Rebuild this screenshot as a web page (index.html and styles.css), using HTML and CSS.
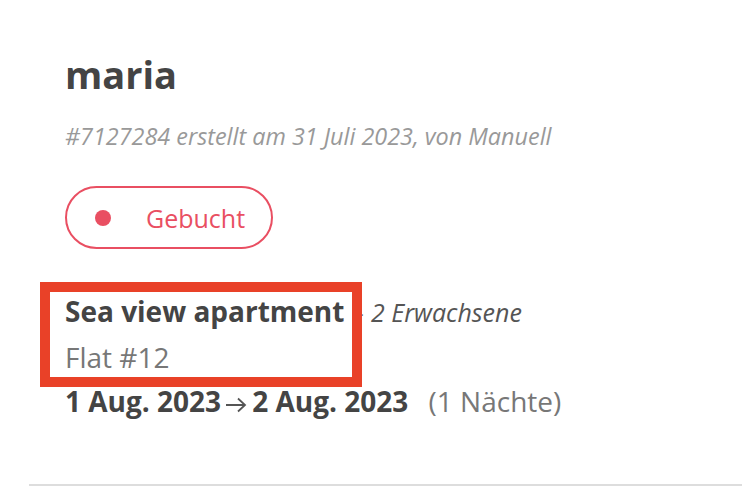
FILE: index.html
```html
<!DOCTYPE html>
<html lang="de">
<head>
<meta charset="utf-8">
<link rel="stylesheet" href="styles.css">
</head>
<body>
<div class="card">
  <h1 class="title">maria</h1>
  <p class="meta">#7127284 erstellt am 31 Juli 2023, von Manuell</p>
  <div class="badge"><span class="dot"></span><span class="badge-text">Gebucht</span></div>
  <div class="details">
    <div class="line"><strong>Sea view apartment</strong> <span class="sep">–</span> <em class="guests">2 Erwachsene</em></div>
    <div class="line unit">Flat #12</div>
    <div class="line"><strong>1 Aug. 2023</strong><svg class="arrow" width="22" height="16" viewBox="0 0 22 16" aria-label="→"><path d="M1 8H20M13 1.5L20 8L13 14.5" fill="none" stroke="#555555" stroke-width="1.8"/></svg><strong>2 Aug. 2023</strong> <span class="nights">(1 Nächte)</span></div>
    <div class="highlight"></div>
  </div>
</div>
</body>
</html>
```
FILE: styles.css
```css
html, body {
  margin: 0;
  padding: 0;
  background: #ffffff;
}
body {
  font-family: "Open Sans", "Noto Sans", sans-serif;
  color: #444444;
}
.card {
  margin-left: 29px;
  padding: 46px 0 61px 36px;
  border-bottom: 2px solid #dddddd;
}
.title {
  margin: 0;
  font-size: 38px;
  line-height: 56px;
  font-weight: 700;
  color: #444444;
}
.meta {
  margin: 20px 0 0 0;
  font-size: 23.4px;
  line-height: 28px;
  font-style: italic;
  color: #999999;
}
.badge {
  margin-top: 36px;
  display: inline-flex;
  align-items: center;
  box-sizing: border-box;
  width: 208px;
  height: 63px;
  border: 2px solid #e94f62;
  border-radius: 32px;
  padding-left: 28px;
}
.dot {
  width: 16px;
  height: 16px;
  border-radius: 50%;
  background: #e94f62;
}
.badge-text {
  margin-left: 35px;
  font-size: 25px;
  color: #e94f62;
}
.details {
  position: relative;
  margin-top: 40px;
}
.line {
  font-size: 28px;
  line-height: 44px;
  color: #444444;
  white-space: nowrap;
}
.line strong {
  font-weight: 700;
}
.sep {
  color: #777777;
  font-size: 24px;
}
.guests {
  font-size: 25px;
  color: #555555;
}
.unit {
  color: #777777;
}
.arrow {
  margin: 0 5px 0 4px;
  vertical-align: -1px;
}
.nights {
  color: #777777;
  margin-left: 13px;
}
.highlight {
  position: absolute;
  left: -25px;
  top: -7px;
  width: 322px;
  height: 105px;
  box-sizing: border-box;
  border: 10px solid #e94128;
}
```
